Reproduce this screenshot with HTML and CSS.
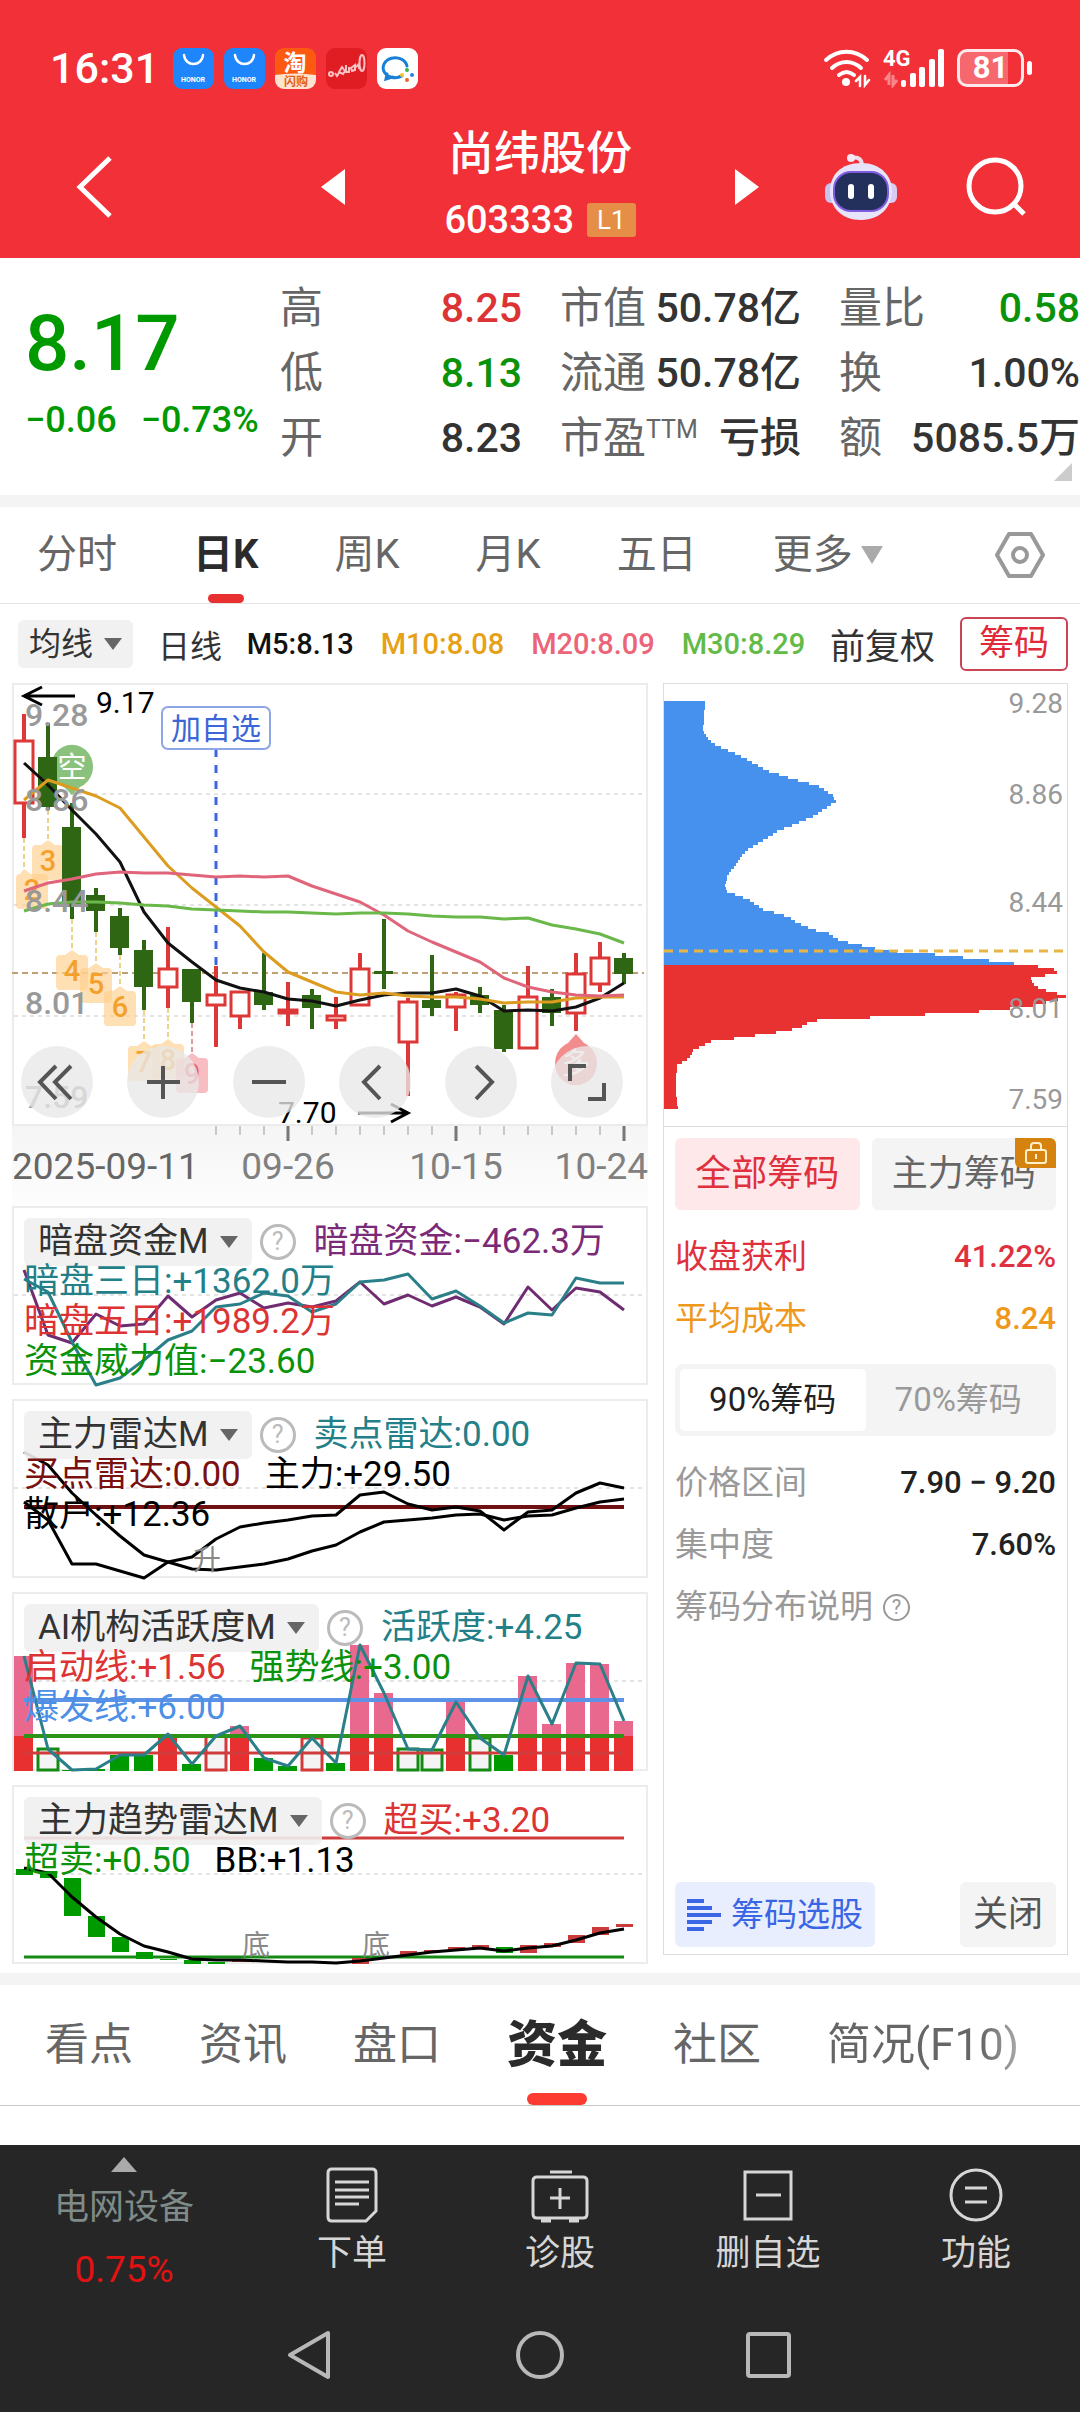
FILE: index.html
```html
<!DOCTYPE html>
<html lang="zh-CN">
<head>
  <meta charset="UTF-8">
  <meta name="viewport" content="width=device-width, initial-scale=1">
  <title>尚纬股份 603333</title>
  <link rel="stylesheet" href="styles.css">
</head>
<body>
<div class="app">

  <!-- Header -->
  <header class="header">
    <div class="status">
      <span class="time">16:31</span>
      <div class="notices">
        <svg class="notice" viewBox="0 0 41 41"><rect width="41" height="41" rx="9" fill="#1e86fa"/><path d="M11 7c1 12 18 12 19 0" fill="none" stroke="#fff" stroke-width="2.5" stroke-linecap="round"/><text x="20" y="34" class="honor">HONOR</text></svg>
        <svg class="notice" viewBox="0 0 41 41"><rect width="41" height="41" rx="9" fill="#1e86fa"/><path d="M11 7c1 12 18 12 19 0" fill="none" stroke="#fff" stroke-width="2.5" stroke-linecap="round"/><text x="20" y="34" class="honor">HONOR</text></svg>
        <svg class="notice" viewBox="0 0 41 41"><rect width="41" height="41" rx="9" fill="#fc5a10"/><path d="M0 27q20-3 41 0v5a9 9 0 0 1-9 9H9a9 9 0 0 1-9-9z" fill="#fde3d0"/><text x="20" y="23" class="tao">淘</text><text x="21" y="38" class="tao-sub">闪购</text></svg>
        <svg class="notice" viewBox="0 0 41 41"><rect width="41" height="41" rx="9" fill="#e01d22"/><g fill="none" stroke="#f9c3c5" stroke-width="2"><circle cx="5" cy="26" r="2"/><path d="M9 25l2 3 2-3M13 24l3-5 3 4-2 3zM20 17v7h3v-5M25 20l4-3v5l-3 1zM30 19l3-3v5"/><ellipse cx="36" cy="15" rx="2.5" ry="8"/></g></svg>
        <svg class="notice" viewBox="0 0 41 41"><rect width="41" height="41" rx="9" fill="#fff"/><path d="M30 18a12 10 0 1 0-5 10M10 26l-1 5 6-2c3 1 6 1 9-1" fill="none" stroke="#1a7fd6" stroke-width="3" stroke-linecap="round"/><circle cx="30" cy="22" r="2" fill="#3cb34a"/><circle cx="35" cy="27" r="2" fill="#2a7fe0"/><circle cx="30" cy="32" r="2" fill="#f0642d"/><circle cx="25" cy="27" r="2" fill="#f8c32c"/></svg>
      </div>
      <div class="signals">
        <svg width="50" height="40" viewBox="0 0 50 40" fill="none" stroke="#fff" stroke-width="4" stroke-linecap="round"><path d="M3 12c12-11 29-11 41 0M9 20c9-8 20-8 29 0M16 27c5-4 10-4 15 0"/><circle cx="23" cy="34" r="4" fill="#fff" stroke="none"/><path d="M33 33l4-4v9M46 32l-4 5v-9" stroke-width="2.5"/></svg>
        <svg width="64" height="40" viewBox="0 0 64 40"><text x="0" y="18" class="net">4G</text><path d="M2 32l4-5v10M14 32l-4 5V27" fill="none" stroke="#f9868b" stroke-width="3"/><g fill="#fff"><rect x="18" y="32" width="5" height="7" rx="2"/><rect x="27" y="25" width="6" height="14" rx="2"/><rect x="36" y="19" width="6" height="20" rx="2"/><rect x="46" y="11" width="6" height="28" rx="2"/><rect x="55" y="1" width="6" height="38" rx="2"/></g></svg>
        <span class="battery">81</span>
      </div>
    </div>

    <div class="titlebar">
      <button class="icon-btn back" aria-label="返回"><svg width="38" height="66" viewBox="0 0 38 66"><path d="M34 4L4 33l30 29" fill="none" stroke="#fff" stroke-width="5"/></svg></button>
      <div class="title-mid">
        <button class="icon-btn" aria-label="上一只"><svg width="24" height="36" viewBox="0 0 24 36"><path d="M24 0v36L0 18z" fill="#fff"/></svg></button>
        <div class="stock">
          <h1>尚纬股份</h1>
          <div class="code">603333 <span class="level">L1</span></div>
        </div>
        <button class="icon-btn" aria-label="下一只"><svg width="24" height="36" viewBox="0 0 24 36"><path d="M0 0v36l24-18z" fill="#fff"/></svg></button>
      </div>
      <div class="title-right">
        <button class="icon-btn" aria-label="智能助手">
          <svg width="72" height="68" viewBox="0 0 72 68">
            <path d="M26 5c8-2 11 2 11 8" fill="none" stroke="#f1dcee" stroke-width="4"/><circle cx="26" cy="5" r="4" fill="#f6e9f6"/>
            <rect x="0" y="30" width="14" height="20" rx="6" fill="#c9c4ee"/><rect x="58" y="30" width="14" height="20" rx="6" fill="#d8ccf0"/>
            <path d="M36 10c20 0 31 13 31 28S56 67 36 67 5 54 5 38s11-28 31-28z" fill="#e6e3fa"/>
            <rect x="9" y="19" width="54" height="39" rx="17" fill="#24305c" stroke="#7f5be0" stroke-width="2"/>
            <rect x="23" y="31" width="6" height="15" rx="3" fill="#fff"/><rect x="43" y="31" width="6" height="15" rx="3" fill="#fff"/>
          </svg>
        </button>
        <button class="icon-btn" aria-label="搜索"><svg width="60" height="60" viewBox="0 0 60 60" fill="none" stroke="#fff" stroke-width="5"><circle cx="29" cy="29" r="26"/><path d="M48 47l10 10"/></svg></button>
      </div>
    </div>
  </header>

  <!-- Quote -->
  <section class="quote">
    <div class="price">
      <strong>8.17</strong>
      <div class="change"><span>−0.06</span><span>−0.73%</span></div>
    </div>
    <dl class="stats">
      <div><dt>高</dt><dd class="up">8.25</dd></div>
      <div><dt>低</dt><dd class="down">8.13</dd></div>
      <div><dt>开</dt><dd>8.23</dd></div>
    </dl>
    <dl class="stats">
      <div><dt>市值</dt><dd>50.78亿</dd></div>
      <div><dt>流通</dt><dd>50.78亿</dd></div>
      <div><dt>市盈<sup>TTM</sup></dt><dd>亏损</dd></div>
    </dl>
    <dl class="stats">
      <div><dt>量比</dt><dd class="down">0.58</dd></div>
      <div><dt>换</dt><dd>1.00%</dd></div>
      <div><dt>额</dt><dd>5085.5万</dd></div>
    </dl>
    <span class="corner"></span>
  </section>

  <!-- Period tabs -->
  <nav class="periods">
    <a href="#">分时</a>
    <a href="#" class="active">日K</a>
    <a href="#">周K</a>
    <a href="#">月K</a>
    <a href="#">五日</a>
    <a href="#" class="more">更多<span class="caret caret-lg"></span></a>
    <button class="icon-btn gear" aria-label="设置"><svg width="50" height="46" viewBox="0 0 50 46" fill="none" stroke="#999" stroke-width="4" stroke-linejoin="round"><path d="M14 2h22l12 21-12 21H14L2 23z"/><circle cx="25" cy="23" r="7"/></svg></button>
  </nav>

  <div class="averages">
    <button class="picker">均线<span class="caret"></span></button>
    <span class="day">日线</span>
    <div class="ma-list">
      <span class="m5">M5:8.13</span>
      <span class="m10">M10:8.08</span>
      <span class="m20">M20:8.09</span>
      <span class="m30">M30:8.29</span>
    </div>
    <span class="adjust">前复权</span>
    <button class="chip-toggle">筹码</button>
  </div>

  <main class="board">
    <div class="charts">
      <!-- K line -->
      <div class="panel kline">
        <svg id="kline" viewBox="0 0 636 443"></svg>
        <div class="tools">
          <button aria-label="最早"><svg viewBox="0 0 72 72"><path d="M35 20L19 36l16 17M50 20L34 36l16 17"/></svg></button>
          <button aria-label="放大"><svg viewBox="0 0 72 72"><path d="M36 20v33M20 36h33"/></svg></button>
          <button aria-label="缩小"><svg viewBox="0 0 72 72"><path d="M19 36h34"/></svg></button>
          <button aria-label="向左"><svg viewBox="0 0 72 72"><path d="M41 20L25 36l16 17"/></svg></button>
          <button aria-label="向右"><svg viewBox="0 0 72 72"><path d="M31 20l16 16-16 17"/></svg></button>
          <button aria-label="全屏"><svg viewBox="0 0 72 72"><path d="M19 35V20h16M53 37v16H37"/></svg></button>
        </div>
      </div>
      <svg id="axis" class="axis" viewBox="0 0 636 80"></svg>

      <!-- Indicators -->
      <section class="panel indicator">
        <svg id="dark" viewBox="0 0 636 179"></svg>
        <div class="legend">
          <div class="line"><button class="picker">暗盘资金M<span class="caret"></span></button><button class="help" aria-label="说明">?</button><span class="purple">暗盘资金:−462.3万</span></div>
          <div class="line"><span class="teal">暗盘三日:+1362.0万</span></div>
          <div class="line"><span class="up">暗盘五日:+1989.2万</span></div>
          <div class="line"><span class="down">资金威力值:−23.60</span></div>
        </div>
      </section>

      <section class="panel indicator">
        <svg id="radar" viewBox="0 0 636 179"></svg>
        <div class="legend">
          <div class="line"><button class="picker">主力雷达M<span class="caret"></span></button><button class="help" aria-label="说明">?</button><span class="teal">卖点雷达:0.00</span></div>
          <div class="line"><span class="maroon">买点雷达:0.00</span><span>主力:+29.50</span></div>
          <div class="line"><span>散户:+12.36</span></div>
        </div>
      </section>

      <section class="panel indicator">
        <svg id="active" viewBox="0 0 636 179"></svg>
        <div class="legend">
          <div class="line"><button class="picker">AI机构活跃度M<span class="caret"></span></button><button class="help" aria-label="说明">?</button><span class="teal">活跃度:+4.25</span></div>
          <div class="line"><span class="up">启动线:+1.56</span><span class="down">强势线:+3.00</span></div>
          <div class="line"><span class="blue">爆发线:+6.00</span></div>
        </div>
      </section>

      <section class="panel indicator">
        <svg id="trend" viewBox="0 0 636 179"></svg>
        <div class="legend">
          <div class="line"><button class="picker">主力趋势雷达M<span class="caret"></span></button><button class="help" aria-label="说明">?</button><span class="up">超买:+3.20</span></div>
          <div class="line"><span class="down">超卖:+0.50</span><span>BB:+1.13</span></div>
        </div>
      </section>
    </div>

    <!-- Chip distribution -->
    <aside class="chips">
      <svg id="chips" viewBox="0 0 405 443"></svg>
      <div class="chip-body">
        <div class="chip-kind">
          <button class="on">全部筹码</button>
          <button>主力筹码<span class="lock"><svg width="24" height="24" viewBox="0 0 24 24" fill="none" stroke="#fff0c8" stroke-width="2"><rect x="2" y="9" width="20" height="13" rx="2"/><path d="M7 9V5q0-3 3-3h4q3 0 3 3v4M12 13v5"/></svg></span></button>
        </div>
        <dl class="rows">
          <div class="red"><dt>收盘获利</dt><dd>41.22%</dd></div>
          <div class="orange"><dt>平均成本</dt><dd>8.24</dd></div>
        </dl>
        <div class="segment">
          <button class="on">90%筹码</button>
          <button>70%筹码</button>
        </div>
        <dl class="rows">
          <div><dt>价格区间</dt><dd>7.90 − 9.20</dd></div>
          <div><dt>集中度</dt><dd>7.60%</dd></div>
        </dl>
        <a href="#" class="note">筹码分布说明<span class="help help-sm">?</span></a>
        <div class="chip-actions">
          <button class="pick"><svg width="34" height="34" viewBox="0 0 34 34" fill="#3a66e5"><path d="M0 1h17v4H0zM0 8h25v4H0zM0 15h34v4H0zM0 22h25v4H0zM0 29h17v4H0z"/></svg>筹码选股</button>
          <button class="close">关闭</button>
        </div>
      </div>
    </aside>
  </main>

  <!-- Detail tabs -->
  <nav class="details">
    <a href="#">看点</a>
    <a href="#">资讯</a>
    <a href="#">盘口</a>
    <a href="#" class="active">资金</a>
    <a href="#">社区</a>
    <a href="#" class="fade">简况(F10)</a>
  </nav>

  <!-- Bottom bars -->
  <footer class="footer">
    <nav class="actions">
      <a href="#" class="sector"><span class="tri"></span><span>电网设备</span><b>0.75%</b></a>
      <a href="#"><svg width="58" height="56" viewBox="0 0 58 56"><path d="M9 2h40q4 0 4 4v38L43 54H9q-4 0-4-4V6q0-4 4-4zM12 15h34M12 23h34M12 30h34M12 37h24"/></svg>下单</a>
      <a href="#"><svg width="58" height="56" viewBox="0 0 58 56"><path d="M19 5h22M6 10h46q4 0 4 4v33q0 4-4 4H6q-4 0-4-4V14q0-4 4-4zM29 21v21M19 31h20M10 54h10M38 54h10"/></svg>诊股</a>
      <a href="#"><svg width="58" height="56" viewBox="0 0 58 56"><path d="M6 5h46v47H6zM17 28h25"/></svg>删自选</a>
      <a href="#"><svg width="58" height="56" viewBox="0 0 58 56"><circle cx="29" cy="28" r="25"/><path d="M18 21h22M18 35h22"/></svg>功能</a>
    </nav>
    <nav class="system">
      <button class="icon-btn" aria-label="后退"><svg width="50" height="52" viewBox="0 0 50 52"><path d="M43 4v44L5 26z"/></svg></button>
      <button class="icon-btn" aria-label="主页"><svg width="50" height="52" viewBox="0 0 50 52"><circle cx="25" cy="26" r="22"/></svg></button>
      <button class="icon-btn" aria-label="最近"><svg width="50" height="52" viewBox="0 0 50 52"><rect x="3" y="5" width="41" height="42" rx="2"/></svg></button>
    </nav>
  </footer>
</div>
<script src="script.js"></script>
</body>
</html>
```
FILE: styles.css
```css
* {
  box-sizing: border-box;
}

body {
  margin: 0;
  background: #fff;
  color: #333;
  font-family: Roboto, "Noto Sans CJK SC", sans-serif;
}

h1, dl, dd {
  margin: 0;
}

a {
  color: inherit;
  text-decoration: none;
}

button {
  margin: 0;
  padding: 0;
  border: none;
  background: none;
  color: inherit;
  font: inherit;
  white-space: nowrap;
}

svg {
  display: block;
}

.app {
  display: flex;
  flex-direction: column;
  min-height: 100vh;
  overflow: hidden;
}

.icon-btn {
  display: flex;
}

/* Header */
.header {
  background: #f13038;
  color: #fff;
}

.status {
  display: flex;
  align-items: center;
  height: 120px;
  padding: 16px 46px 0 50px;
}

.time {
  font-size: 43px;
  font-weight: 500;
}

.notices {
  display: flex;
  gap: 10px;
  margin-left: 14px;
}

.notice {
  width: 41px;
  height: 41px;
}

.honor {
  fill: #fff;
  font-size: 7px;
  font-weight: 700;
  text-anchor: middle;
}

.tao {
  fill: #fff;
  font-size: 23px;
  font-weight: 700;
  text-anchor: middle;
}

.tao-sub {
  fill: #e2601a;
  font-size: 12px;
  font-weight: 700;
  text-anchor: middle;
}

.signals {
  display: flex;
  align-items: center;
  gap: 10px;
  margin-left: auto;
}

.net {
  fill: #fff;
  font-size: 22px;
  font-weight: 700;
}

.battery {
  position: relative;
  width: 67px;
  margin-right: 10px;
  border: 3px solid #ffe9ea;
  border-radius: 10px;
  background: linear-gradient(90deg, #f6686e 78%, #f13038 78%);
  font-size: 31px;
  font-weight: 700;
  line-height: 32px;
  text-align: center;
}

.battery::after {
  content: "";
  position: absolute;
  top: 9px;
  right: -11px;
  width: 5px;
  height: 14px;
  border-radius: 3px;
  background: #fff;
}

.titlebar {
  display: grid;
  grid-template-columns: 1fr 438px 1fr;
  align-items: center;
  height: 138px;
  padding-bottom: 4px;
}

.back {
  margin-left: 76px;
}

.title-mid {
  display: flex;
  align-items: center;
  justify-content: space-between;
}

.stock {
  text-align: center;
}

.stock h1 {
  font-size: 46px;
  font-weight: 500;
  line-height: 66px;
}

.code {
  display: flex;
  align-items: center;
  gap: 13px;
  font-size: 38px;
  font-weight: 500;
  line-height: 68px;
}

.level {
  padding: 0 10px;
  border-radius: 3px;
  background: #e58e48;
  font-size: 26px;
  font-weight: 400;
  line-height: 34px;
}

.title-right {
  display: flex;
  align-items: center;
  justify-content: flex-end;
  gap: 69px;
  padding-right: 54px;
}

/* Quote */
.quote {
  position: relative;
  display: grid;
  grid-template-columns: 217px 242px 241px 1fr;
  column-gap: 38px;
  height: 249px;
  padding: 18px 0 0 25px;
  border-bottom: 12px solid #f4f4f4;
}

.quote .price {
  color: #090;
}

.price strong {
  display: block;
  padding-top: 14px;
  font-size: 78px;
  font-weight: 500;
  line-height: 108px;
}

.change {
  display: flex;
  gap: 24px;
  font-size: 36px;
  font-weight: 500;
  line-height: 44px;
  white-space: nowrap;
}

.stats div {
  display: flex;
  justify-content: space-between;
  line-height: 65px;
  white-space: nowrap;
}

.stats dt {
  color: #666;
  font-size: 43px;
}

.stats sup {
  font-size: 25px;
  line-height: 25px;
}

.stats dd {
  font-size: 41px;
  font-weight: 500;
}

.up {
  color: #dc3434;
}

.stats .down,
.down {
  color: #0b920b;
}

.corner {
  position: absolute;
  right: 8px;
  bottom: 14px;
  border-bottom: 18px solid #ccc;
  border-left: 18px solid transparent;
}

/* Period tabs */
.periods {
  display: flex;
  gap: 76px;
  align-items: center;
  padding: 0 35px 0 37px;
  border-bottom: 1px solid #e3e3e3;
  color: #666;
  font-size: 40px;
  line-height: 96px;
}

.periods a,
.details a {
  position: relative;
  white-space: nowrap;
}

.periods .active {
  color: #2b2b2b;
  font-weight: 700;
}

.periods .active::after {
  content: "";
  position: absolute;
  bottom: 0;
  left: calc(50% - 18px);
  width: 36px;
  height: 9px;
  border-radius: 5px;
  background: #e83030;
}

.more,
.picker {
  display: flex;
  align-items: center;
}

.gear {
  margin-left: auto;
}

.caret {
  margin-left: 11px;
  border-top: 12px solid #666;
  border-right: 9px solid transparent;
  border-left: 9px solid transparent;
}

.caret-lg {
  margin-left: 8px;
  border-top: 18px solid #aaa;
  border-right-width: 11px;
  border-left-width: 11px;
}

/* Moving averages */
.averages {
  display: flex;
  align-items: center;
  justify-content: space-between;
  height: 79px;
  padding: 0 12px 0 18px;
  font-size: 32px;
  white-space: nowrap;
}

.picker {
  padding: 0 11px;
  border-radius: 6px;
  background: rgba(240, 240, 240, 0.9);
  color: #333;
  line-height: 48px;
}

.ma-list {
  display: flex;
  gap: 27px;
  font-size: 29px;
  font-weight: 500;
}

.m5 { color: #111; }
.m10 { color: #e6a117; }
.m20 { color: #ec6478; }
.m30 { color: #62bb46; }

.adjust {
  font-size: 35px;
}

.chip-toggle {
  padding: 0 17px;
  border: 2px solid #c94455;
  border-radius: 6px;
  color: #e02a3a;
  font-size: 35px;
  line-height: 50px;
}

/* Board */
.board {
  display: grid;
  grid-template-columns: 636fr 405fr;
  gap: 15px;
  padding: 0 12px 9px;
  border-bottom: 12px solid #f4f4f4;
}

.charts {
  min-width: 0;
}

.charts svg,
.chips > svg {
  width: 100%;
  overflow: visible;
}

.panel {
  position: relative;
  box-shadow: inset 0 0 0 2px #ececec;
}

.axis {
  background: linear-gradient(180deg, #f5f5f5, #fdfdfd);
}

.indicator + .indicator {
  margin-top: 14px;
}

.legend {
  position: absolute;
  top: 16px;
  left: 12px;
  color: #000;
  font-size: 35px;
}

.line {
  display: flex;
  align-items: center;
  gap: 24px;
  height: 40px;
  line-height: 40px;
  white-space: nowrap;
}

.line .picker {
  padding: 0 14px;
  line-height: 48px;
}

.line .help {
  margin: 0 -6px 0 -16px;
}

.help {
  width: 36px;
  height: 36px;
  border: 3px solid #bbb;
  border-radius: 50%;
  color: #bbb;
  font-size: 25px;
  line-height: 30px;
  text-align: center;
}

.purple { color: #7b2a77; }
.teal { color: #237f88; }
.maroon { color: #7a1010; }
.blue { color: #4d8fe6; }

.tools {
  position: absolute;
  bottom: 8px;
  left: 9px;
  display: flex;
  gap: 34px;
}

.tools button {
  width: 72px;
  height: 72px;
  border-radius: 50%;
  background: rgba(232, 232, 232, 0.78);
}

.tools path {
  fill: none;
  stroke: #555;
  stroke-width: 4;
}

/* Chart drawing */
.grid {
  stroke: #e4e4e4;
  stroke-width: 2;
  stroke-dasharray: 4 4;
}

.label {
  fill: #999;
  font-size: 32px;
  font-weight: 500;
}

.mark {
  fill: #000;
  font-size: 30px;
}

.date {
  fill: #808080;
  font-size: 37px;
}

.date-first {
  fill: #666;
}

.date-mid {
  text-anchor: middle;
}

.date-last {
  text-anchor: end;
}

.chip-label {
  fill: #999;
  font-size: 28px;
  text-anchor: end;
}

.tag-num {
  fill: #f5a02c;
  font-size: 29px;
  font-weight: 500;
  text-anchor: middle;
}

.tag-red {
  fill: #ea5b62;
}

.pin {
  fill: #fff;
  font-size: 29px;
  text-anchor: middle;
}

.signal {
  fill: #888;
  font-size: 28px;
}

.add {
  fill: #3a66d8;
  font-size: 30px;
  text-anchor: middle;
}

/* Chips */
.chips {
  display: flex;
  flex-direction: column;
  margin-bottom: 9px;
  box-shadow: inset 0 0 0 1px #ddd;
}

.chip-body {
  display: flex;
  flex: 1;
  flex-direction: column;
  padding: 11px 12px 8px;
  border-top: 1px solid #ddd;
  font-size: 33px;
}

.chip-kind {
  display: grid;
  grid-template-columns: 1fr 1fr;
  gap: 12px;
  margin-bottom: 16px;
  font-size: 36px;
  line-height: 72px;
}

.chip-kind button {
  position: relative;
  border-radius: 6px;
  background: #f4f4f4;
  color: #666;
}

.chip-kind .on {
  background: #ffe8ea;
  color: #e0303e;
}

.lock {
  position: absolute;
  top: 0;
  right: 0;
  display: flex;
  justify-content: center;
  align-items: center;
  width: 41px;
  height: 30px;
  border-radius: 0 6px 0 6px;
  background: #d6820f;
}

.rows div {
  display: flex;
  justify-content: space-between;
  line-height: 62px;
}

.rows dt {
  color: #999;
}

.rows dd {
  color: #222;
  font-size: 31px;
  font-weight: 500;
}

.rows .red * {
  color: #e0303e;
}

.rows .orange * {
  color: #ee981c;
}

.segment {
  display: grid;
  grid-template-columns: 1fr 1fr;
  margin: 14px 0 16px;
  padding: 5px;
  border-radius: 8px;
  background: #f4f4f4;
  line-height: 62px;
}

.segment button {
  border-radius: 5px;
  color: #999;
}

.segment .on {
  background: #fff;
  color: #222;
}

.note {
  display: flex;
  align-items: center;
  gap: 10px;
  color: #999;
  line-height: 62px;
}

.help-sm {
  width: 27px;
  height: 27px;
  border-width: 2px;
  border-color: #999;
  color: #999;
  font-size: 20px;
  line-height: 23px;
}

.chip-actions {
  display: flex;
  justify-content: space-between;
  margin-top: auto;
  line-height: 65px;
}

.pick {
  display: flex;
  align-items: center;
  gap: 10px;
  padding: 0 12px;
  border-radius: 6px;
  background: #e9eefe;
  color: #3a66e5;
}

.close {
  padding: 0 13px;
  border-radius: 6px;
  background: #f4f4f4;
  color: #555;
  font-size: 35px;
}

/* Detail tabs */
.details {
  display: flex;
  gap: 66px;
  margin-bottom: 39px;
  padding-left: 45px;
  border-bottom: 1px solid #c8c8c8;
  color: #666;
  font-size: 44px;
  line-height: 120px;
}

.details .active {
  color: #2b2b2b;
  font-size: 50px;
  font-weight: 900;
}

.details .active::after {
  content: "";
  position: absolute;
  bottom: 0;
  left: calc(50% - 30px);
  width: 60px;
  height: 12px;
  border-radius: 6px;
  background: #fd3b30;
}

.fade {
  background: linear-gradient(90deg, #666 80%, #aaa);
  background-clip: text;
  color: transparent;
}

/* Footer */
.footer {
  flex: 1;
  background: #262626;
  color: #d6d6d6;
}

.actions {
  display: grid;
  grid-template-columns: 248fr repeat(4, 208fr);
  height: 155px;
  font-size: 35px;
  line-height: 62px;
}

.actions a {
  display: flex;
  flex-direction: column;
  align-items: center;
  padding-top: 22px;
}

.actions svg,
.system svg {
  fill: none;
  stroke: #d6d6d6;
  stroke-width: 3;
}

.actions .sector {
  padding-top: 12px;
  color: #7f8b88;
}

.tri {
  margin-bottom: 5px;
  border-right: 13px solid transparent;
  border-bottom: 15px solid #aaa;
  border-left: 13px solid transparent;
}

.sector b {
  color: #e01212;
  font-size: 37px;
  font-weight: 400;
}

.system {
  display: flex;
  justify-content: center;
  gap: 180px;
  padding: 29px 0;
}

.system svg {
  stroke: #b8b8b8;
  stroke-width: 4;
  stroke-linejoin: round;
}
```
FILE: script.js
```js
const X = i => 12 + i * 24;
const RED = '#dc3838', GREEN = '#2f6614';

const draw = (id, parts) => {
  document.getElementById(id).innerHTML = parts.flat().join('');
};
const poly = (ys, color, w) =>
  `<polyline points="${ys.map((y, i) => X(i) + ',' + y).join(' ')}" fill="none" stroke="${color}" stroke-width="${w}" stroke-linejoin="round"/>`;
const line = (x1, y1, x2, y2, color, w, dash = 'none') =>
  `<line x1="${x1}" y1="${y1}" x2="${x2}" y2="${y2}" stroke="${color}" stroke-width="${w}" stroke-dasharray="${dash}"/>`;
const rect = (x, y, w, h, fill, stroke = 'none') =>
  `<rect x="${x}" y="${y}" width="${w}" height="${h}" fill="${fill}" stroke="${stroke}" stroke-width="3"/>`;
const text = (x, y, cls, s) => `<text x="${x}" y="${y}" class="${cls}">${s}</text>`;
const grid = y => `<line class="grid" x1="2" x2="634" y1="${y}" y2="${y}"/>`;

// [up, high, body top, body bottom, low]
const candles = [
  [1, 31, 57, 121, 155], [0, 40, 74, 124, 127], [0, 120, 144, 224, 236], [0, 205, 212, 228, 249],
  [0, 225, 233, 265, 272], [0, 257, 267, 304, 327], [1, 244, 285, 305, 325], [0, 286, 286, 319, 340],
  [1, 283, 311, 323, 364], [1, 308, 308, 334, 346], [0, 270, 309, 322, 327], [1, 299, 326, 331, 343],
  [0, 306, 312, 325, 346], [1, 314, 332, 338, 346], [1, 270, 285, 323, 323], [0, 236, 288, 291, 306],
  [1, 315, 318, 360, 413], [0, 272, 317, 325, 333], [1, 309, 311, 325, 348], [0, 304, 312, 322, 330],
  [0, 322, 327, 366, 369], [1, 283, 313, 366, 366], [0, 306, 314, 330, 343], [1, 270, 290, 331, 348],
  [1, 259, 274, 302, 309], [0, 270, 275, 291, 301]
];
const ma5 = [80, 102, 127, 151, 179, 229, 260, 279, 297, 305, 309, 316, 318, 323, 317, 312, 310, 310, 306, 313, 328, 327, 328, 324, 315, 300];
const ma10 = [117, 97, 105, 113, 125, 154, 183, 205, 224, 243, 269, 289, 299, 309, 312, 310, 313, 314, 314, 316, 320, 319, 319, 315, 314, 314];
const ma20 = [208, 200, 196, 191, 189, 190, 190, 192, 194, 193, 194, 193, 203, 211, 219, 232, 248, 259, 269, 279, 295, 304, 309, 312, 313, 312];
const ma30 = [228, 221, 219, 219, 220, 222, 223, 226, 227, 228, 229, 229, 230, 231, 230, 230, 231, 233, 234, 234, 236, 235, 242, 246, 251, 260];

const candle = ([up, high, top, bottom, low], i) => up
  ? line(X(i), high, X(i), top, RED, 4) + line(X(i), bottom, X(i), low, RED, 4) +
    rect(X(i) - 9, top + 1, 18, Math.max(bottom - top - 2, 2), '#fff', RED)
  : line(X(i), high, X(i), low, GREEN, 4) + rect(X(i) - 10, top, 19, bottom - top, GREEN);

// nine-turn tags hanging below the candles: [number, tip y]
const tags = [[2, 186], [3, 157], [4, 267], [5, 280], [6, 303], [7, 358], [8, 356], [9, 370]];
const tag = ([n, y], i) => {
  const last = n === 9;
  const x = i === 0 ? X(0) + 8 : X(i);
  return line(X(i), candles[i][4], X(i), y, last ? '#d99' : '#ecd28c', 2, '5 3') +
    `<path d="M${X(i)} ${y}l7 5h${x - X(i) + 5}q4 0 4 4v27q0 4-4 4h-24q-4 0-4-4v-27q0-4 4-4h${Math.max(5 - x + X(i), 0)}z" fill="${last ? '#f59aa0' : '#ffcf8c'}" opacity=".65"/>` +
    text(x, y + 31, last ? 'tag-num tag-red' : 'tag-num', n);
};

draw('kline', [
  grid(111), grid(222), grid(333),
  line(0, 290, 632, 290, '#c0a070', 2, '6 4'),
  tags.map(tag),
  '<path d="M60 112l-8-8a21 22 0 1 1 16 0z" fill="#6db35c" opacity=".8"/>', text(60, 95, 'pin', '空'),
  '<path d="M564 351l8 9a21 22 0 1 1-16 0z" fill="#f28080" opacity=".9"/>', text(564, 391, 'pin', '多'),
  line(204, 66, 204, 283, '#3a66e0', 3, '8 8'),
  candles.map(candle),
  poly(ma5, '#111', 3), poly(ma10, '#dc9c20', 3), poly(ma20, '#e0647a', 3), poly(ma30, '#6ab84a', 3),
  text(13, 43, 'label', '9.28'), text(13, 128, 'label', '8.86'), text(13, 229, 'label', '8.44'),
  text(13, 331, 'label', '8.01'), text(13, 425, 'label', '7.59'),
  '<path d="M63 13H13M30 4L12 13l18 9" fill="none" stroke="#000" stroke-width="3"/>',
  text(84, 30, 'mark', '9.17'),
  '<rect x="150" y="24" width="108" height="42" rx="6" fill="#fff" stroke="#8ea6e6" stroke-width="2"/>',
  text(204, 56, 'add', '加自选'),
  text(266, 440, 'mark', '7.70'),
  '<path d="M346 430h50M379 421l17 9-17 9" fill="none" stroke="#000" stroke-width="3"/>'
]);

const ticks = [];
for (let i = 8; i < 26; i++) {
  const big = i % 7 === 4;
  ticks.push(line(X(i), 0, X(i), big ? 15 : 9, big ? '#777' : '#999', big ? 3 : 1));
}
draw('axis', [
  ticks,
  text(0, 53, 'date date-first', '2025-09-11'),
  text(X(11), 53, 'date date-mid', '09-26'),
  text(X(18), 53, 'date date-mid', '10-15'),
  text(636, 53, 'date date-last', '10-24')
]);

draw('dark', [
  grid(89),
  poly([64, 129, 137, 108, 120, 118, 90, 111, 94, 87, 102, 97, 101, 95, 76, 98, 89, 100, 91, 101, 118, 81, 104, 82, 86, 104], '#6f2c70', 3),
  poly([73, 86, 136, 179, 172, 154, 134, 125, 101, 98, 87, 90, 106, 98, 76, 74, 68, 93, 85, 100, 117, 107, 109, 72, 77, 77], '#2a7f88', 3)
]);

draw('radar', [
  grid(89),
  line(12, 108, 612, 108, '#701010', 4),
  poly([53, 66, 94, 116, 137, 156, 163, 170, 171, 168, 165, 160, 152, 146, 133, 123, 121, 119, 116, 115, 121, 117, 116, 109, 103, 100], '#000', 3),
  poly([103, 121, 165, 165, 172, 179, 163, 158, 140, 128, 124, 121, 117, 116, 96, 93, 105, 111, 108, 112, 131, 113, 111, 94, 84, 89], '#000', 3),
  text(181, 171, 'signal', '升')
]);

// r / g: solid, R / G: hollow
const activity = [64, 157, 178, 177, 163, 163, 142, 172, 144, 134, 166, 174, 146, 171, 53, 101, 157, 158, 110, 146, 163, 84, 132, 71, 72, 129];
const kinds = 'rGggggrgRrggRgrrGGrGgrrrrr';
draw('active', [
  grid(89),
  activity.map((y, i) => {
    const k = kinds[i], x = X(i) - 10;
    if (k === 'R' || k === 'G') return rect(x, y, 20, 178 - y, '#f4f4f4', k === 'R' ? '#d23a3a' : '#148a14');
    if (k === 'g') return rect(x, y, 19, 179 - y, '#090');
    return (y < 144 ? rect(x, y, 19, 144 - y, '#e8688e') : '') + rect(x, Math.max(y, 144), 19, 179 - Math.max(y, 144), '#e83030');
  }),
  line(12, 161, 612, 161, '#d03c3c', 3),
  line(12, 144, 612, 144, '#2b9416', 4),
  line(12, 108, 612, 108, '#5c93e6', 4),
  poly(activity, '#2a7f88', 3)
]);

// [index, top, bottom, up]
const trend = [
  [0, 84, 90, 0], [1, 86, 93, 0], [2, 93, 131, 0], [3, 131, 152, 0], [4, 152, 167, 0], [5, 167, 174, 0],
  [6, 174, 175, 0], [7, 175, 179, 0], [8, 177, 179, 0], [9, 175, 177, 1], [14, 173, 179, 1], [16, 166, 170, 1],
  [17, 165, 167, 1], [18, 162, 165, 1], [19, 160, 163, 1], [20, 162, 168, 0], [21, 160, 168, 1],
  [22, 158, 162, 1], [23, 150, 158, 1], [24, 142, 150, 1], [25, 139, 142, 1]
];
draw('trend', [
  grid(89),
  line(12, 53, 612, 53, '#d03c3c', 3),
  line(12, 172, 612, 172, '#148a14', 3),
  text(230, 170, 'signal', '底'), text(350, 170, 'signal', '底'),
  trend.map(([i, t, b, up]) => rect(X(i) - 8, t, 17, b - t, up ? '#c83c3c' : '#090')),
  poly([83, 88, 112, 132, 149, 161, 167, 174, 175, 175, 176, 177, 177, 178, 176, 173, 170, 167, 165, 163, 166, 163, 161, 155, 148, 144], '#000', 3)
]);

// chip distribution outline: [width, y]
const outline = [
  [41, 18], [39, 46], [45, 56], [54, 62], [69, 68], [85, 76], [102, 86], [124, 93], [155, 102], [169, 111],
  [172, 118], [167, 120], [149, 132], [130, 140], [115, 146], [102, 154], [82, 166], [72, 180], [64, 190],
  [61, 200], [63, 207], [84, 215], [99, 225], [124, 232], [134, 239], [154, 247], [165, 249], [175, 256],
  [198, 261], [220, 266], [245, 268], [284, 271], [307, 274], [342, 278], [382, 283], [397, 287], [386, 290],
  [367, 294], [368, 298], [374, 303], [387, 308], [404, 311], [394, 315], [369, 321], [330, 326], [284, 329],
  [237, 331], [190, 334], [157, 335], [144, 338], [137, 343], [119, 347], [97, 350], [79, 353], [60, 355],
  [47, 357], [29, 366], [26, 373], [13, 381], [12, 394], [12, 410], [14, 425]
];
const bars = [];
for (let y = 18, k = 0; y < 425; y += 3) {
  while (outline[k + 1][1] < y) k++;
  const [w0, y0] = outline[k], [w1, y1] = outline[k + 1];
  const w = Math.round(w0 + (w1 - w0) * (y - y0) / (y1 - y0));
  bars.push(rect(1, y, w, 3, y < 282 ? '#4791ee' : '#e83131'));
}
draw('chips', [
  bars,
  line(1, 268, 400, 268, '#e6b545', 3, '9 6'),
  text(400, 30, 'chip-label', '9.28'), text(400, 121, 'chip-label', '8.86'), text(400, 229, 'chip-label', '8.44'),
  text(400, 335, 'chip-label', '8.01'), text(400, 426, 'chip-label', '7.59')
]);
```
